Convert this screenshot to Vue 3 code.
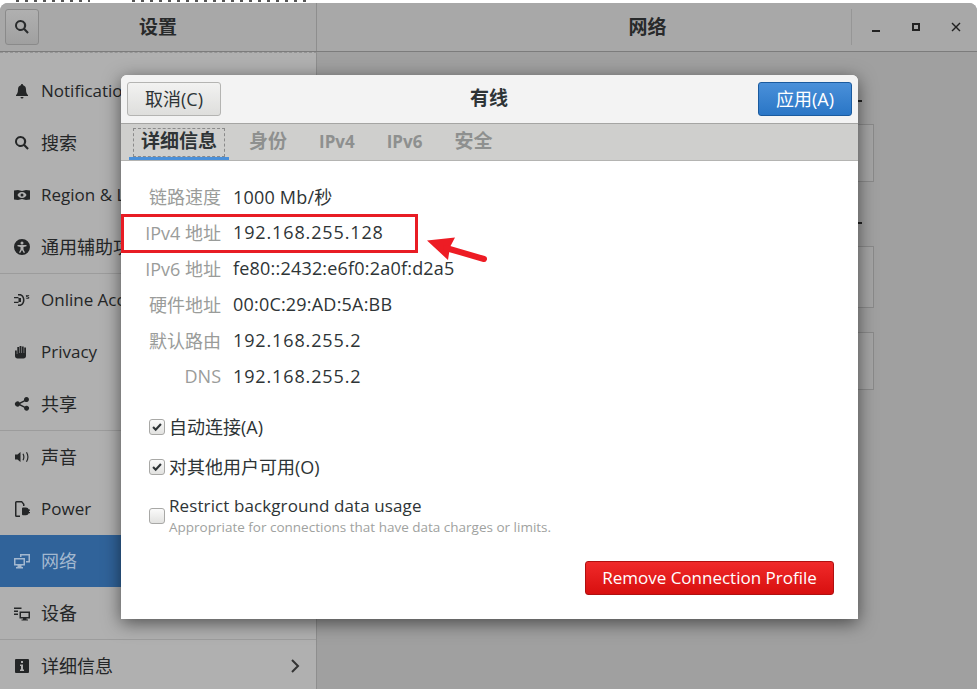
<template>
  <div class="page">
    <div class="page__strip">
      <span class="page__ticks page__ticks--a"></span>
      <span class="page__ticks page__ticks--b"></span>
    </div>

    <div class="window">
      <header class="titlebar">
        <div class="titlebar__left">
          <button class="titlebar__search">
            <svg class="icon" viewBox="0 0 16 16"><path :d="icons.search" /></svg>
          </button>
          <span class="titlebar__title">设置</span>
        </div>
        <div class="titlebar__right">
          <span class="titlebar__title">网络</span>
          <div class="titlebar__controls">
            <svg class="ctl" viewBox="0 0 12 12"><path d="M2 9h8v2H2z" /></svg>
            <svg class="ctl" viewBox="0 0 12 12"><path fill-rule="evenodd" d="M2 2h8v8H2zM4 4v4h4V4z" /></svg>
            <svg class="ctl" viewBox="0 0 12 12"><path d="M2.500 1.500 6 5l3.500-3.500 1 1L7 6l3.500 3.500-1 1L6 7l-3.500 3.500-1-1L5 6 1.500 2.500z" /></svg>
          </div>
        </div>
      </header>

      <div class="window__body">
        <aside class="sidebar">
          <div v-for="(group, g) in menu" :key="g" class="sidebar__group">
            <div
              v-for="item in group"
              :key="item.label"
              class="sidebar__row"
              :class="{ 'sidebar__row--active': item.active }"
            >
              <svg class="icon" viewBox="0 0 16 16"><path fill-rule="evenodd" :d="icons[item.icon]" /></svg>
              <span class="sidebar__label" :class="{ 'sidebar__label--latin': item.latin }">{{ item.label }}</span>
              <svg v-if="item.more" class="sidebar__more" viewBox="0 0 10 16">
                <path d="M2 2l6 6-6 6" />
              </svg>
            </div>
          </div>
        </aside>

        <main class="content">
          <div class="content__head"><span></span></div>
          <div class="content__card content__card--first"></div>
          <div class="content__head content__head--second"><span></span></div>
          <div class="content__card content__card--second"></div>
          <div class="content__card content__card--third"></div>
        </main>
      </div>
    </div>

    <section class="dialog">
      <div class="dialog__header">
        <button class="btn btn--plain">取消(C)</button>
        <span class="dialog__title">有线</span>
        <button class="btn btn--blue">应用(A)</button>
      </div>

      <nav class="tabs">
        <span
          v-for="tab in tabs"
          :key="tab.label"
          class="tabs__item"
          :class="{ 'tabs__item--active': tab.active, 'tabs__item--latin': tab.latin }"
        >
          <span class="tabs__text">{{ tab.label }}</span>
        </span>
      </nav>

      <div class="dialog__body">
        <dl class="details">
          <template v-for="row in details" :key="row.label">
            <dt class="details__label">{{ row.label }}</dt>
            <dd class="details__value" :class="{ 'details__value--ip': row.ip }">{{ row.value }}</dd>
          </template>
        </dl>

        <div class="option option--first">
          <span class="check">
            <svg viewBox="0 0 16 16"><path d="M3.500 8l3 3 6-6.500" /></svg>
          </span>
          <span>自动连接(A)</span>
        </div>
        <div class="option">
          <span class="check">
            <svg viewBox="0 0 16 16"><path d="M3.500 8l3 3 6-6.500" /></svg>
          </span>
          <span>对其他用户可用(O)</span>
        </div>
        <div class="option">
          <span class="check"></span>
          <div>
            <div class="option__title">Restrict background data usage</div>
            <div class="option__hint">Appropriate for connections that have data charges or limits.</div>
          </div>
        </div>

        <div class="dialog__footer">
          <button class="btn btn--red">Remove Connection Profile</button>
        </div>
      </div>
    </section>

    <div class="mark"></div>
    <svg class="arrow" viewBox="0 0 70 34">
      <path class="arrow__head" d="M3 6.500 31 3.500 26 13 24 26z" />
      <path class="arrow__tail" d="M22 14 60 25" />
    </svg>
  </div>
</template>

<script setup>
const icons = {
  search: 'M6.500 1a5.500 5.500 0 1 0 3.200 10l3.600 3.700 1.500-1.500-3.600-3.600A5.500 5.500 0 0 0 6.500 1zm0 2a3.500 3.500 0 1 1 0 7 3.500 3.500 0 0 1 0-7z',
  bell: 'M8 1a1.200 1.200 0 0 0-1.200 1.200C4.800 2.800 4 4.500 4 6.500 4 9.500 3.200 11 2 12v1h12v-1c-1.200-1-2-2.500-2-5.500 0-2-.8-3.700-2.800-4.300A1.200 1.200 0 0 0 8 1zM6.500 14a1.500 1.500 0 0 0 3 0z',
  region: 'M0 3.500 4 3l4 1 4-1 4 .5v9l-4 .5-4-1-4 1-4-.5zM8 5C5.500 5 4 6.500 3.500 8 4 9.500 5.500 11 8 11s4-1.500 4.500-3C12 6.500 10.500 5 8 5zm0 1.500a1.500 1.500 0 1 1 0 3 1.500 1.500 0 0 1 0-3z',
  access: 'M8 0a8 8 0 1 0 0 16A8 8 0 0 0 8 0zM8 2.500a1.500 1.500 0 1 1 0 3 1.500 1.500 0 0 1 0-3zM3.500 6h9v1.300L9.500 8v2.500l1.500 3-1.200.5L8 11l-1.800 3-1.200-.5 1.500-3V8L3.500 7.300z',
  online: 'M0 5h4.500v1.300H0zM0 9.700h4.500V11H0zM4 2h1.500c3 0 5 2.700 5 6s-2 6-5 6H4v-1.500h1.500c2 0 3.500-2 3.500-4.500S7.500 3.500 5.500 3.500H4zM4.500 6h2.500v4H4.500zM13.500 3c1 0 1.800.4 1.800 1h-1c0-.2-.4-.3-.8-.3s-.7.1-.7.300c0 .6 2.600.3 2.600 1.800 0 .7-.8 1.100-1.800 1.100s-1.900-.4-1.900-1.100h1c0 .3.400.4.900.4s.8-.1.8-.4c0-.6-2.600-.3-2.600-1.800 0-.6.700-1 1.700-1z',
  hand: 'M1 6.500h1.800V10h.5V3h1.800v6h.5V2h1.800v7h.5V2.500h1.800V9h.5V3.500h1.800V12c0 1.500-1 2.500-2.500 2.500H3.500C2 14.500 1 13.500 1 12z',
  share: 'M12.500 1a2.500 2.500 0 0 0-2.400 3.200L5.600 6.600a2.500 2.500 0 1 0 0 2.800l4.500 2.400a2.500 2.500 0 1 0 .7-1.400L6.400 8.200a2.500 2.500 0 0 0 0-.5l4.400-2.300A2.500 2.500 0 1 0 12.500 1z',
  sound: 'M1 5.500h2.500L6.500 3v10l-3-2.500H1zM8.500 5c1 1.800 1 4.200 0 6l1 .5c1.300-2.200 1.300-4.800 0-7zM12 3.500c1.800 2.800 1.800 6.200 0 9l1 .5c2-3.200 2-6.800 0-10z',
  power: 'M2.500 0H8l2.500 3v2H9V3.500L7.500 1.500h-5v13H6V16H2.500A1.500 1.500 0 0 1 1 14.500v-13A1.500 1.500 0 0 1 2.500 0zM9 6.500h3a3 3 0 0 1 2.800 2H16v1.200h-1V11h1v1.200h-1.200a3 3 0 0 1-2.800 2H9a1 1 0 0 1-1-1v-5.700a1 1 0 0 1 1-1z',
  network: 'M6 1h10v8.500h-4V8h2.500V2.500h-7V4H6zM0 5h11v7.500H7.500V14H9v1.500H2V14h1.500v-1.500H0zM1.500 6.500v4.500h8V6.500z',
  devices: 'M0 2.500h7.500V4H0zM0 5.500h4V7H0zM5.500 6.500H16v7h-3.500v1H14v1H7.500v-1H9v-1H5.500zM7 8v4h7.500V8zM0 8.500h4V10H0z',
  info: 'M2 1h12a1 1 0 0 1 1 1v12a1 1 0 0 1-1 1H2a1 1 0 0 1-1-1V2a1 1 0 0 1 1-1zM7 3v2h2V3zM6 6.500V8h1v3.500H6V13h4v-1.500H9v-5z',
}

const menu = [
  [
    { icon: 'bell', label: 'Notifications', latin: true },
    { icon: 'search', label: '搜索' },
    { icon: 'region', label: 'Region & Language', latin: true },
    { icon: 'access', label: '通用辅助功能' },
  ],
  [
    { icon: 'online', label: 'Online Accounts', latin: true },
    { icon: 'hand', label: 'Privacy', latin: true },
    { icon: 'share', label: '共享' },
  ],
  [
    { icon: 'sound', label: '声音' },
    { icon: 'power', label: 'Power', latin: true },
    { icon: 'network', label: '网络', active: true },
    { icon: 'devices', label: '设备' },
  ],
  [{ icon: 'info', label: '详细信息', more: true }],
]

const tabs = [
  { label: '详细信息', active: true },
  { label: '身份' },
  { label: 'IPv4', latin: true },
  { label: 'IPv6', latin: true },
  { label: '安全' },
]

const details = [
  { label: '链路速度', value: '1000 Mb/秒' },
  { label: 'IPv4 地址', value: '192.168.255.128', ip: true },
  { label: 'IPv6 地址', value: 'fe80::2432:e6f0:2a0f:d2a5' },
  { label: '硬件地址', value: '00:0C:29:AD:5A:BB' },
  { label: '默认路由', value: '192.168.255.2', ip: true },
  { label: 'DNS', value: '192.168.255.2', ip: true },
]
</script>

<style>
html,
body {
  margin: 0;
  background: #fff;
}
</style>

<style scoped>
.page {
  position: relative;
  width: 977px;
  height: 689px;
  overflow: hidden;
  background: #fff;
  font-family: "Open Sans", "Noto Sans CJK SC", sans-serif;
  font-size: 18px;
  color: #2e3436;
}
.page__strip {
  display: flex;
  height: 3px;
  padding-left: 16px;
  gap: 42px;
}
.page__ticks {
  height: 2px;
  background: repeating-linear-gradient(90deg, #555 0 3px, transparent 3px 9px);
}
.page__ticks--a {
  width: 74px;
}
.page__ticks--b {
  width: 176px;
}
.window {
  display: flex;
  flex-direction: column;
  height: 686px;
  border-radius: 8px 8px 0 0;
  overflow: hidden;
  background: #a0a0a0;
}
.titlebar {
  display: flex;
  flex: none;
  height: 48px;
  background: #a8a8a8;
  border-bottom: 1px solid #7c7c7c;
}
.titlebar__left {
  position: relative;
  display: flex;
  align-items: center;
  justify-content: center;
  width: 317px;
  padding-bottom: 2px;
  box-sizing: border-box;
  border-right: 1px solid #8e8e8e;
}
.titlebar__right {
  position: relative;
  display: flex;
  flex: 1;
  align-items: center;
  justify-content: center;
  padding: 0 0 2px 1px;
}
.titlebar__title {
  font-size: 19px;
  font-weight: 700;
  color: #282a2b;
}
.titlebar__search {
  position: absolute;
  left: 5px;
  top: 6px;
  display: flex;
  align-items: center;
  justify-content: center;
  width: 34px;
  height: 36px;
  padding: 0;
  border: 1px solid #8a8a8a;
  border-radius: 3px;
  background: linear-gradient(#b0b0b0, #a0a0a0);
  color: #2a2c2d;
}
.titlebar__controls {
  position: absolute;
  right: 0;
  top: 6px;
  display: flex;
  align-items: center;
  gap: 28px;
  height: 36px;
  padding: 0 15px 0 18px;
  border-left: 1px solid #969696;
}
.ctl {
  width: 12px;
  height: 12px;
  fill: #222;
}
.icon {
  flex: none;
  width: 16px;
  height: 16px;
  fill: currentColor;
}
.window__body {
  display: flex;
  flex: 1;
  min-height: 0;
}
.sidebar {
  flex: none;
  width: 317px;
  box-sizing: border-box;
  padding-top: 12px;
  background: #b0b0b0;
  border-top: 1px dashed #949494;
  border-right: 1px solid #8e8e8e;
}
.sidebar__group {
  border-bottom: 1px solid #9c9c9c;
}
.sidebar__group:last-child {
  border-bottom: none;
}
.sidebar__row {
  display: flex;
  align-items: center;
  gap: 11px;
  height: 52px;
  padding: 0 16px 0 14px;
  color: #242627;
  white-space: nowrap;
}
.sidebar__row--active {
  background: #30639a;
  color: #a3b8cf;
}
.sidebar__label {
  margin-right: auto;
  padding-bottom: 3px;
}
.sidebar__label--latin {
  padding-bottom: 1px;
  font-size: 17px;
}
.sidebar__more {
  width: 10px;
  height: 16px;
  fill: none;
  stroke: #333;
  stroke-width: 2;
}
.content {
  flex: 1;
  padding: 46px 103px 0;
}
.content__head {
  display: flex;
  justify-content: flex-end;
  align-items: center;
  height: 6px;
  margin-bottom: 20px;
  padding-right: 12px;
}
.content__head span {
  width: 8px;
  height: 2px;
  background: #222;
}
.content__head--second {
  margin-top: 38px;
}
.content__card {
  box-sizing: border-box;
  background: #a5a5a5;
  border: 1px solid #8a8a8a;
}
.content__card--first {
  height: 58px;
}
.content__card--second {
  height: 62px;
}
.content__card--third {
  height: 58px;
  margin-top: 24px;
}
.dialog {
  position: absolute;
  left: 121px;
  top: 75px;
  display: flex;
  flex-direction: column;
  width: 737px;
  height: 544px;
  border-radius: 6px 6px 0 0;
  background: #fff;
  box-shadow: 0 4px 18px rgba(0, 0, 0, 0.55);
}
.dialog__header {
  display: grid;
  grid-template-columns: 1fr auto 1fr;
  align-items: center;
  flex: none;
  height: 49px;
  padding: 0 6px 1px;
  box-sizing: border-box;
  border-bottom: 1px solid #a5a5a3;
  border-radius: 6px 6px 0 0;
  background: #f3f3f3;
}
.dialog__title {
  padding: 0 1px 3px 0;
  font-size: 19px;
  font-weight: 700;
}
.btn {
  height: 34px;
  padding: 0 0 2px;
  border-radius: 3px;
  font-family: inherit;
  font-size: 18px;
  white-space: nowrap;
}
.btn--plain {
  justify-self: start;
  width: 94px;
  border: 1px solid #b4b4b2;
  background: linear-gradient(#f2f2f1, #dededc);
  color: #2e3436;
}
.btn--blue {
  justify-self: end;
  width: 94px;
  border: 1px solid #1a5a9e;
  background: linear-gradient(#4a90d9, #2a76c6);
  color: #fff;
}
.btn--red {
  width: 249px;
  border: 1px solid #b01010;
  background: linear-gradient(#f02a2a, #d80f0f);
  font-size: 17px;
  color: #fff;
}
.tabs {
  display: flex;
  flex: none;
  gap: 8px;
  height: 37px;
  padding-left: 8px;
  box-sizing: border-box;
  border-bottom: 1px solid #b4b4b2;
  background: #cfcfcd;
}
.tabs__item {
  padding: 4px 4px 3px;
  font-size: 19px;
  font-weight: 700;
  color: #8e908f;
}
.tabs__item--latin {
  font-size: 17px;
}
.tabs__item--active {
  color: #2e3436;
  box-shadow: inset 0 -3px 0 #4a90d9;
}
.tabs__text {
  display: block;
  height: 29px;
  padding: 0 7px;
  box-sizing: border-box;
  border: 1px dashed transparent;
  line-height: 25px;
}
.tabs__item--active .tabs__text {
  border-color: #8a8a8a;
}
.dialog__body {
  display: flex;
  flex: 1;
  flex-direction: column;
  padding: 17px 24px 24px;
}
.details {
  display: grid;
  grid-template-columns: 76px 1fr;
  grid-auto-rows: 36px;
  column-gap: 12px;
  align-items: center;
  margin: 0;
}
.details__label {
  text-align: right;
  white-space: nowrap;
  color: #9a9c9a;
}
.details__value {
  margin: 0;
  letter-spacing: 0.2px;
}
.details__value--ip {
  letter-spacing: 0.87px;
}
.option {
  display: flex;
  align-items: center;
  gap: 4px;
  margin-top: 16px;
  margin-left: 4px;
  line-height: 24px;
}
.option--first {
  margin-top: 21px;
}
.check {
  display: flex;
  flex: none;
  width: 16px;
  height: 16px;
  box-sizing: border-box;
  border: 1px solid #a8a8a6;
  border-radius: 3px;
  background: linear-gradient(#fafafa, #e2e2e0);
}
.check svg {
  width: 14px;
  height: 14px;
  fill: none;
  stroke: #2e3436;
  stroke-width: 2.4;
}
.option__title {
  line-height: 22px;
  font-size: 17px;
  letter-spacing: 0.1px;
}
.option__hint {
  line-height: 20px;
  font-size: 13.5px;
  color: #a0a2a0;
}
.dialog__footer {
  display: flex;
  justify-content: flex-end;
  margin-top: auto;
}
.mark {
  position: absolute;
  left: 121px;
  top: 214px;
  width: 297px;
  height: 39px;
  box-sizing: border-box;
  border: 3px solid #e81c24;
}
.arrow {
  position: absolute;
  left: 424px;
  top: 234px;
  width: 70px;
  height: 34px;
}
.arrow__head {
  fill: #ed1c24;
}
.arrow__tail {
  fill: none;
  stroke: #ed1c24;
  stroke-width: 6;
  stroke-linecap: round;
}
</style>
